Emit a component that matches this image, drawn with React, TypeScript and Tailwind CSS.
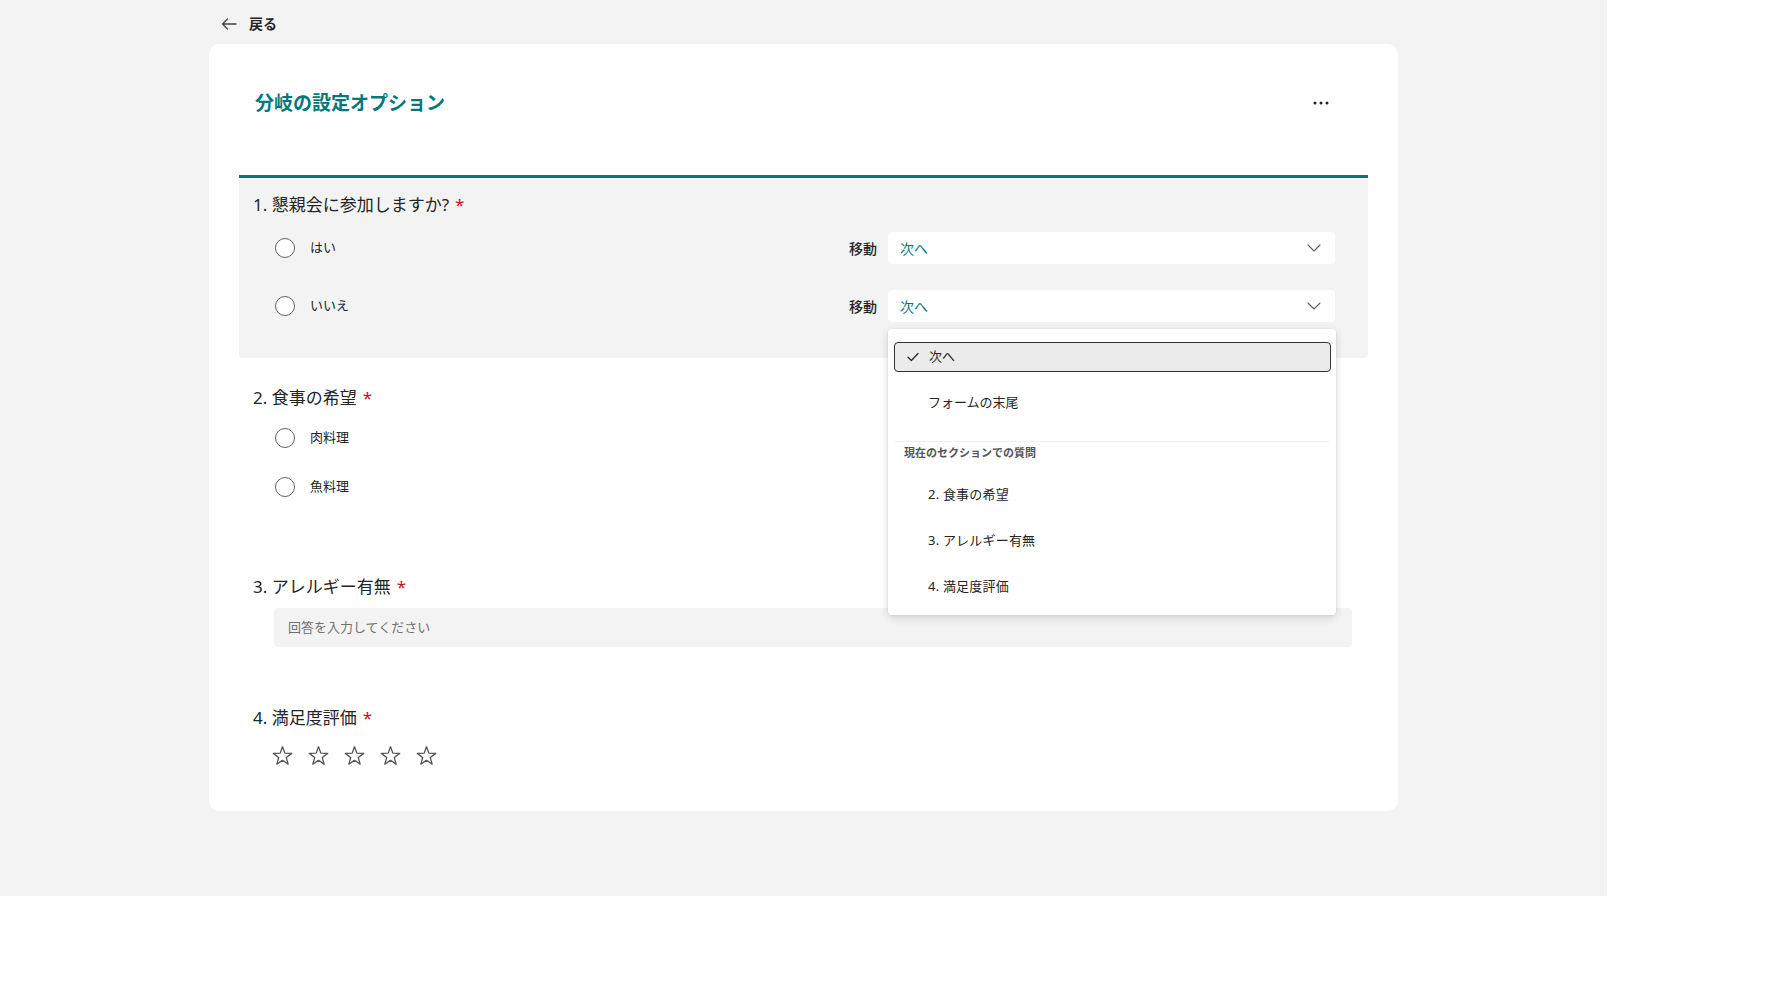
import React from "react";

const teal = "text-[#03787c]";

function BackArrow() {
  return (
    <svg width="16" height="12" viewBox="0 0 16 12" fill="none">
      <path d="M15 6H1.5M6.5 1L1.5 6l5 5" stroke="#424242" strokeWidth="1.3" strokeLinecap="round" strokeLinejoin="round" />
    </svg>
  );
}

function Dots() {
  return (
    <svg width="16" height="4" viewBox="0 0 16 4" fill="#242424">
      <circle cx="2" cy="2" r="1.5" />
      <circle cx="8" cy="2" r="1.5" />
      <circle cx="14" cy="2" r="1.5" />
    </svg>
  );
}

function Chevron() {
  return (
    <svg width="14" height="8" viewBox="0 0 14 8" fill="none">
      <path d="M1 1l6 6 6-6" stroke="#616161" strokeWidth="1.1" strokeLinecap="round" strokeLinejoin="round" />
    </svg>
  );
}

function Check() {
  return (
    <svg width="12" height="10" viewBox="0 0 12 10" fill="none">
      <path d="M1 5.2l3.4 3.3L11 1.5" stroke="#242424" strokeWidth="1.2" strokeLinecap="round" strokeLinejoin="round" />
    </svg>
  );
}

function Star() {
  return (
    <svg width="21" height="21" viewBox="0 0 20 20" fill="none">
      <path
        d="M10 1.6L12.23 7.73L18.75 7.96L13.61 11.97L15.41 18.24L10 14.6L4.59 18.24L6.39 11.97L1.25 7.96L7.77 7.73Z"
        stroke="#555555"
        strokeWidth="1.25"
        strokeLinejoin="round"
      />
    </svg>
  );
}

function Radio() {
  return <span className="block w-[20px] h-[20px] rounded-full border border-[#616161] bg-white shrink-0" />;
}

function QuestionTitle({ num, text }: { num: number; text: string }) {
  return (
    <div className="text-[17px] leading-[24px] text-[#242424]">
      {num}. {text}
      <span className="ml-[6px] text-[#c50f1f]">*</span>
    </div>
  );
}

function BranchMenu() {
  const sectionItems = ["2. 食事の希望", "3. アレルギー有無", "4. 満足度評価"];
  return (
    <div className="absolute left-0 top-[39px] z-10 w-[448px] h-[286px] bg-white rounded-[4px] shadow-[0_3px_8px_rgba(0,0,0,0.14),0_0_2px_rgba(0,0,0,0.12)] pt-[5px] pb-[4px]">
      <div className="h-[46px] flex items-center pl-[6px] pr-[5px]">
        <div className="w-full h-[30px] flex items-center gap-[10px] pl-[12px] rounded-[4px] border-[1.5px] border-[#333333] bg-[#ebebeb] text-[13px] text-[#242424]">
          <Check />
          <span>次へ</span>
        </div>
      </div>
      <div className="h-[46px] flex items-center pl-[40px] text-[13px] text-[#242424]">フォームの末尾</div>
      <div className="mt-[15px] mx-[7px] h-px bg-[#f0f0f0]" />
      <div className="mt-[3px] pl-[16px] text-[11px] leading-[16px] font-bold text-[#555555]">現在のセクションでの質問</div>
      <div className="mt-[11px]">
        {sectionItems.map((t) => (
          <div key={t} className="h-[46px] flex items-center pl-[40px] text-[13px] tracking-[0.2px] text-[#242424]">
            {t}
          </div>
        ))}
      </div>
    </div>
  );
}

function BranchRow({ label, open }: { label: string; open?: boolean }) {
  return (
    <div className="h-[32px] flex items-center justify-between pl-[22px]">
      <div className="flex items-center gap-[15px]">
        <Radio />
        <span className="text-[13px] text-[#242424]">{label}</span>
      </div>
      <div className="flex items-center gap-[11px]">
        <span className="text-[14px] font-medium text-[#242424]">移動</span>
        <div className="relative">
          <div className="w-[447px] h-[32px] bg-white rounded-[4px] flex items-center justify-between pl-[12px] pr-[14px]">
            <span className={`text-[14px] ${teal}`}>次へ</span>
            <Chevron />
          </div>
          {open && <BranchMenu />}
        </div>
      </div>
    </div>
  );
}

function ChoiceRow({ label }: { label: string }) {
  return (
    <div className="h-[28px] flex items-center gap-[15px] pl-[22px]">
      <Radio />
      <span className="text-[13px] text-[#242424]">{label}</span>
    </div>
  );
}

export default function App() {
  return (
    <div className="w-[1607px] h-[896px] bg-[#f3f3f3] font-['Noto_Sans','Noto_Sans_CJK_JP',sans-serif] text-[#242424]">
      <div className="h-[44px] pt-[3px] pl-[221px] flex items-center gap-[12px]">
        <BackArrow />
        <span className="text-[14px] font-bold text-[#242424]">戻る</span>
      </div>

      <div className="ml-[209px] w-[1189px] h-[767px] bg-white rounded-[10px] pt-[45px]">
        <div className="h-[28px] flex items-center justify-between pl-[46px] pr-[69px]">
          <h1 className={`text-[19px] leading-[28px] font-bold ${teal}`}>分岐の設定オプション</h1>
          <Dots />
        </div>

        <div className="mx-[30px] mt-[58px]">
          <section className="border-t-[3px] border-[#03787c] bg-[#f3f3f3] rounded-b-[4px] pt-[15px] pb-[36px] pl-[14px] pr-[33px]">
            <QuestionTitle num={1} text="懇親会に参加しますか?" />
            <div className="mt-[15px] flex flex-col gap-[26px]">
              <BranchRow label="はい" />
              <BranchRow label="いいえ" open />
            </div>
          </section>

          <section className="mt-[28px] px-[14px]">
            <QuestionTitle num={2} text="食事の希望" />
            <div className="mt-[14px] flex flex-col gap-[21px]">
              <ChoiceRow label="肉料理" />
              <ChoiceRow label="魚料理" />
            </div>
          </section>

          <section className="mt-[74px] pl-[14px] pr-[16px]">
            <QuestionTitle num={3} text="アレルギー有無" />
            <div className="mt-[9px] ml-[21px] h-[39px] bg-[#f3f3f3] rounded-[4px] flex items-center pl-[14px] text-[13px] text-[#707070]">
              回答を入力してください
            </div>
          </section>

          <section className="mt-[59px] px-[14px]">
            <QuestionTitle num={4} text="満足度評価" />
            <div className="mt-[15px] pl-[19px] flex gap-[15px]">
              <Star />
              <Star />
              <Star />
              <Star />
              <Star />
            </div>
          </section>
        </div>
      </div>
    </div>
  );
}
